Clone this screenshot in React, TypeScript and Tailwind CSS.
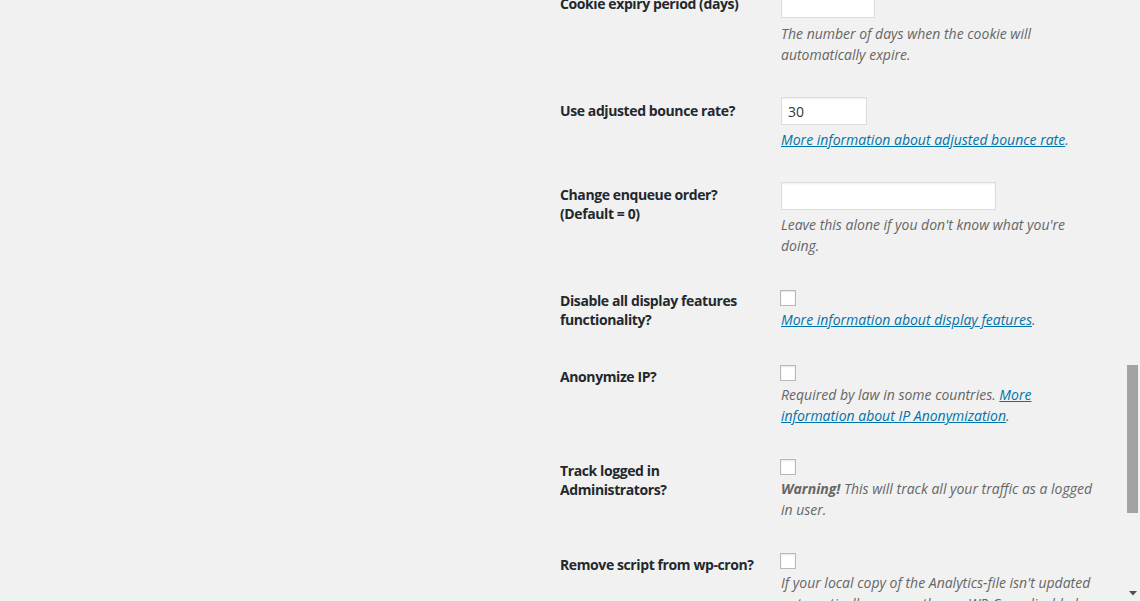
import React from "react";

const font = { fontFamily: '"Open Sans", "Noto Sans", sans-serif' };

function TextInput({ w, value }: { w: string; value?: string }) {
  return (
    <div
      className={`${w} h-[28px] bg-white border border-[#dddddd] shadow-[inset_0_1px_2px_rgba(0,0,0,0.07)] flex items-center pl-[6px] text-[14px] text-[#32373c]`}
    >
      {value}
    </div>
  );
}

function Checkbox() {
  return (
    <div className="w-[16px] h-[16px] -ml-[1px] bg-white border border-[#b4b9be] shadow-[inset_0_1px_2px_rgba(0,0,0,0.1)]" />
  );
}

function Desc({ children, mt }: { children: React.ReactNode; mt: string }) {
  return (
    <p className={`${mt} w-[320px] text-[14px] leading-[21px] italic text-[#666666]`}>{children}</p>
  );
}

function Link({ children }: { children: React.ReactNode }) {
  return <span className="text-[#0073aa] underline">{children}</span>;
}

function Row({
  mt,
  pt,
  label,
  children,
}: {
  mt: string;
  pt: string;
  label: React.ReactNode;
  children: React.ReactNode;
}) {
  return (
    <div className={`flex items-start ${mt}`}>
      <div
        className={`w-[221px] shrink-0 ${pt} -mb-[30px] text-[14px] leading-[19px] font-bold tracking-[-0.4px] text-[#23282d] whitespace-nowrap`}
      >
        {label}
      </div>
      <div className="flex flex-col">{children}</div>
    </div>
  );
}

export default function App() {
  return (
    <div className="relative w-[1140px] h-[601px] overflow-hidden bg-[#f1f1f1]" style={font}>
      <div className="flex">
        <div className="w-[560px] shrink-0" />
        <div className="flex flex-col mt-[-10px]">
          <Row mt="mt-0" pt="pt-[4px]" label={<>Cookie expiry period (days)</>}>
            <TextInput w="w-[94px]" />
            <Desc mt="mt-[5px]">
              The number of days when the cookie will automatically expire.
            </Desc>
          </Row>
          <Row mt="mt-[32px]" pt="pt-[4px]" label={<>Use adjusted bounce rate?</>}>
            <TextInput w="w-[86px]" value="30" />
            <Desc mt="mt-[4px]">
              <Link>More information about adjusted bounce rate</Link>.
            </Desc>
          </Row>
          <Row
            mt="mt-[32px]"
            pt="pt-[3px]"
            label={
              <>
                Change enqueue order?
                <br />
                (Default = 0)
              </>
            }
          >
            <TextInput w="w-[215px]" />
            <Desc mt="mt-[4px]">Leave this alone if you don't know what you're doing.</Desc>
          </Row>
          <Row
            mt="mt-[34px]"
            pt="pt-[1px]"
            label={
              <>
                Disable all display features
                <br />
                functionality?
              </>
            }
          >
            <Checkbox />
            <Desc mt="mt-[3px]">
              <Link>More information about display features</Link>.
            </Desc>
          </Row>
          <Row mt="mt-[35px]" pt="pt-[2px]" label={<>Anonymize IP?</>}>
            <Checkbox />
            <Desc mt="mt-[3px]">
              Required by law in some countries. <Link>More</Link>
              <br />
              <Link>information about IP Anonymization</Link>.
            </Desc>
          </Row>
          <Row
            mt="mt-[33px]"
            pt="pt-[2px]"
            label={
              <>
                Track logged in
                <br />
                Administrators?
              </>
            }
          >
            <Checkbox />
            <Desc mt="mt-[3px]">
              <b className="font-bold">Warning!</b> This will track all your traffic as a logged
              <br />
              in user.
            </Desc>
          </Row>
          <Row mt="mt-[33px]" pt="pt-[2px]" label={<>Remove script from wp-cron?</>}>
            <Checkbox />
            <Desc mt="mt-[3px]">
              If your local copy of the Analytics-file isn't updated
              <br />
              automatically, remove the wp-WP-Cron disabled check.
            </Desc>
          </Row>
        </div>
      </div>

      {/* scrollbar */}
      <div className="absolute right-0 top-0 w-[15px] h-[601px] bg-[#f1f1f1]">
        <div className="absolute left-[2px] top-[365px] w-[11px] h-[148px] bg-[#a3a3a3]" />
        <svg className="absolute left-[4px] top-[591px]" width="8" height="5" viewBox="0 0 8 5">
          <path d="M0 0 H8 L4 4.5 Z" fill="#505050" />
        </svg>
      </div>
    </div>
  );
}
